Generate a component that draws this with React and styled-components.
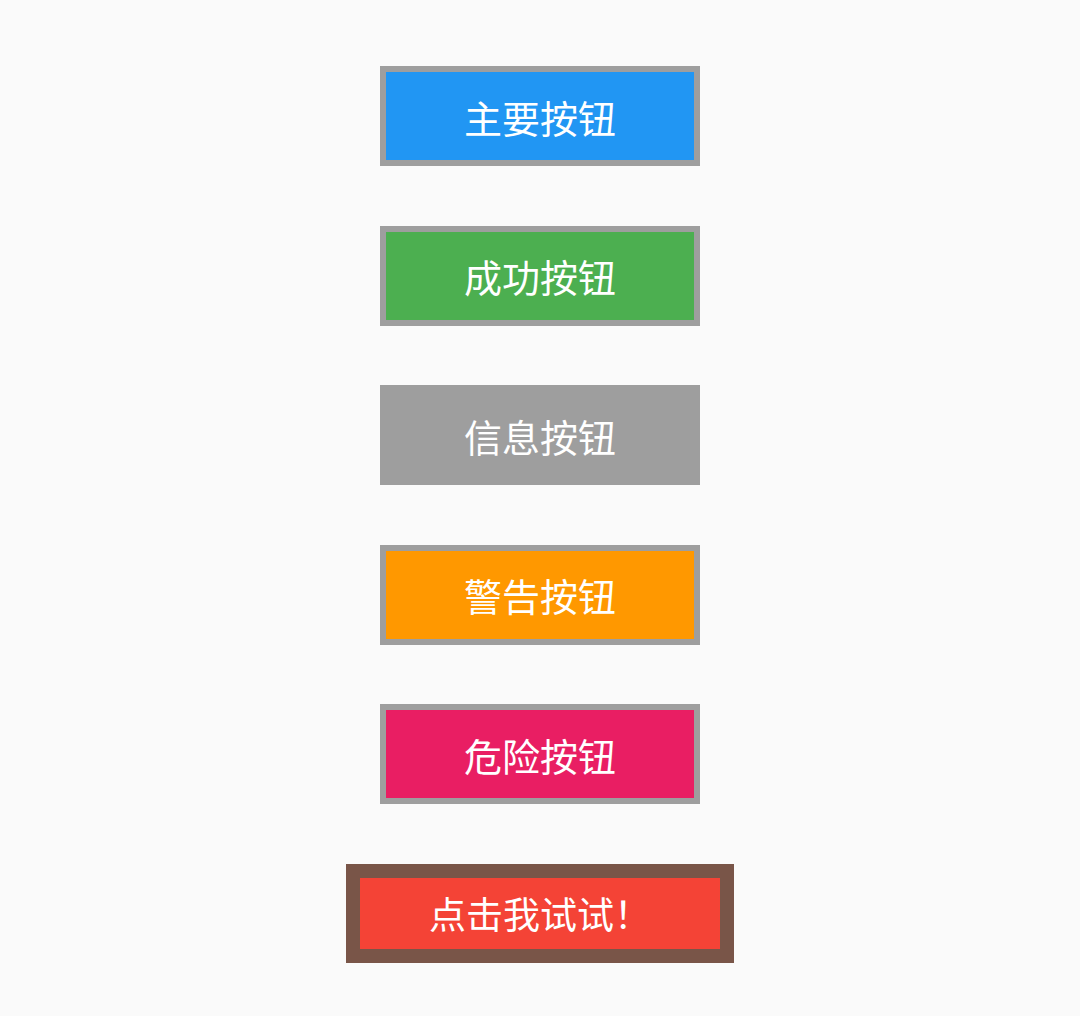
import React from 'react';
import styled, { createGlobalStyle } from 'styled-components';

const GlobalStyle = createGlobalStyle`
  html, body {
    margin: 0;
    padding: 0;
    background: #fafafa;
  }
  body {
    font-family: "Noto Sans CJK SC", "Noto Sans", sans-serif;
  }
`;

const Page = styled.div`
  min-height: 1016px;
  display: flex;
  flex-direction: column;
  align-items: center;
  padding-top: 66px;
  gap: 59.6px;
  box-sizing: border-box;
`;

const ColorButton = styled.button`
  box-sizing: border-box;
  width: 320px;
  height: 100px;
  border: 6px solid ${(p) => p.$border || '#9e9e9e'};
  background: ${(p) => p.$color};
  color: #fff;
  font-family: inherit;
  font-size: 38px;
  display: flex;
  align-items: center;
  justify-content: center;
  padding: 0;
  margin: 0;
  cursor: pointer;
`;

const TryButton = styled.button`
  box-sizing: border-box;
  width: 388px;
  height: 99px;
  border: 14px solid #795548;
  background: #f44336;
  color: #fff;
  font-family: inherit;
  font-size: 37px;
  display: flex;
  align-items: center;
  justify-content: center;
  padding: 0;
  margin: 0;
  cursor: pointer;
`;

const buttons = [
  { label: '主要按钮', color: '#2196f3' },
  { label: '成功按钮', color: '#4caf50' },
  { label: '信息按钮', color: '#9e9e9e' },
  { label: '警告按钮', color: '#ff9800' },
  { label: '危险按钮', color: '#e91e63' },
];

export default function App() {
  return (
    <>
      <GlobalStyle />
      <Page>
        {buttons.map((b) => (
          <ColorButton key={b.label} $color={b.color}>
            {b.label}
          </ColorButton>
        ))}
        <TryButton>点击我试试！</TryButton>
      </Page>
    </>
  );
}
